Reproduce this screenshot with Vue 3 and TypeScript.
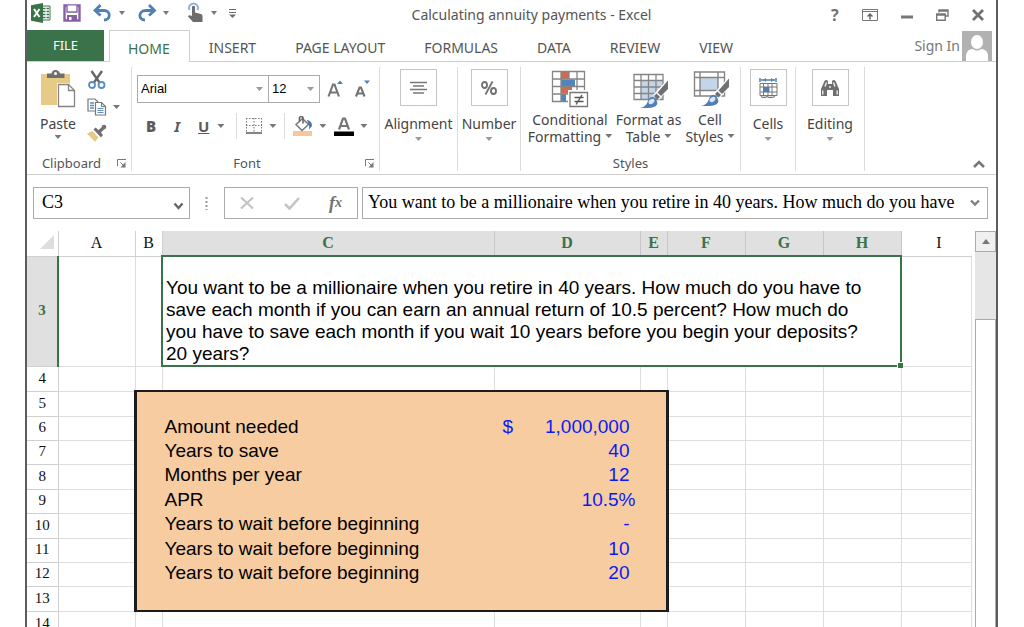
<script setup lang="ts">
import { ref } from 'vue'

interface InputRow {
  n: number
  height: number
  label?: string
  sign?: string
  value?: string
  percent?: boolean
}

const tabs: string[] = ['HOME', 'INSERT', 'PAGE LAYOUT', 'FORMULAS', 'DATA', 'REVIEW', 'VIEW']
const columns: string[] = ['A', 'B', 'C', 'D', 'E', 'F', 'G', 'H', 'I']
const selectedColumns: string[] = ['C', 'D', 'E', 'F', 'G', 'H']
const activeTab = ref<string>('HOME')
const cellName = ref<string>('C3')
const formula = ref<string>('You want to be a millionaire when you retire in 40 years. How much do you have')

const inputRows: InputRow[] = [
  { n: 5, height: 25 },
  { n: 6, height: 24, label: 'Amount needed', sign: '$', value: '1,000,000' },
  { n: 7, height: 24, label: 'Years to save', value: '40' },
  { n: 8, height: 25, label: 'Months per year', value: '12' },
  { n: 9, height: 24, label: 'APR', value: '10.5%', percent: true },
  { n: 10, height: 25, label: 'Years to wait before beginning', value: '-' },
  { n: 11, height: 24, label: 'Years to wait before beginning', value: '10' },
  { n: 12, height: 24, label: 'Years to wait before beginning', value: '20' },
  { n: 13, height: 25 },
]
</script>

<template>
  <div class="window">
    <header class="titlebar">
      <div class="quick">
        <svg width="20" height="20" viewBox="0 0 20 20" aria-hidden="true">
          <path d="M10 3h9v14h-9z" fill="#fff" stroke="#3a7249" />
          <path d="M12 5.5h2.5M15.5 5.5H18M12 8.5h2.5M15.5 8.5H18M12 11.5h2.5M15.5 11.5H18M12 14.5h2.5M15.5 14.5H18" stroke="#3a7249" stroke-width="1.6" />
          <path d="M0 2.2 12 0v20L0 17.8z" fill="#3a7249" />
          <path d="m3 6 5.5 8M8.5 6 3 14" stroke="#fff" stroke-width="1.9" />
        </svg>
        <button aria-label="Save">
          <svg width="18" height="18" viewBox="0 0 18 18">
            <path d="M1.500 1.500h15v15h-15z" fill="#fff" stroke="#8560a8" stroke-width="2.400" />
            <path d="M4 1.500v6.500h10v-6.500" fill="#fff" stroke="#8560a8" stroke-width="1.400" />
            <path d="M4 17v-6h10v6z" fill="#8560a8" /><path d="M6 13h2.500v3H6z" fill="#fff" />
          </svg>
        </button>
        <button class="split" aria-label="Undo">
          <svg width="20" height="18" viewBox="0 0 20 18">
            <path d="M2 6.500h9c7 0 7 9.500 0 9.500" fill="none" stroke="#4f7fb5" stroke-width="2.800" />
            <path d="M7.500 1 2 6.500l5.500 5" fill="none" stroke="#4f7fb5" stroke-width="2.800" />
          </svg><i class="caret"></i>
        </button>
        <button class="split" aria-label="Redo">
          <svg width="20" height="18" viewBox="0 0 20 18">
            <path d="M17 6.500H9c-8 0-8 9.500-1 9.500" fill="none" stroke="#4f7fb5" stroke-width="2.800" />
            <path d="m12 1 5.500 5.500-5.500 5" fill="none" stroke="#4f7fb5" stroke-width="2.800" />
          </svg><i class="caret"></i>
        </button>
        <button class="split" aria-label="Touch mode">
          <svg width="24" height="22" viewBox="0 0 24 22">
            <path d="M8.500 8a4.500 4.500 0 1 1 8 0" fill="none" stroke="#92b2d6" stroke-width="2" />
            <path d="M11 4.500q1.500-1.500 3 0v6l6 1.500q1.500.5 1.500 2v6h-9.500L7 14.500q1-2 4-.5z" fill="#6d6d6d" />
          </svg><i class="caret"></i>
        </button>
        <button aria-label="Customize toolbar">
          <svg width="7" height="9" viewBox="0 0 7 9"><path d="M0 .5h7M0 3.500h7" stroke="#6d6d6d" /><path d="M0 5.500h7L3.500 9z" fill="#6d6d6d" /></svg>
        </button>
      </div>
      <h1>Calculating annuity payments - Excel</h1>
      <div class="controls">
        <button class="help" aria-label="Help">?</button>
        <button aria-label="Ribbon display options">
          <svg width="16" height="12" viewBox="0 0 16 12"><path d="M.5.5h15v11H.5zM0 2.500h16" fill="none" stroke="#777" /><path d="M8 10.500V5M5.500 7.500 8 5l2.500 2.500" fill="none" stroke="#666" stroke-width="1.500" /></svg>
        </button>
        <button aria-label="Minimize"><svg width="12" height="12" viewBox="0 0 12 12"><path d="M0 8h12" stroke="#777" stroke-width="3" /></svg></button>
        <button aria-label="Restore">
          <svg width="13" height="12" viewBox="0 0 13 12"><path d="M3 3.500V1h9v6h-2.500M3 2h9M.7 5h8.500v6.300H.7zM.7 6h8.500" fill="none" stroke="#777" stroke-width="1.400" /></svg>
        </button>
        <button aria-label="Close"><svg width="12" height="12" viewBox="0 0 12 12"><path d="m1 1 10 10M11 1 1 11" stroke="#707070" stroke-width="2.800" /></svg></button>
      </div>
    </header>

    <nav class="tabs">
      <button class="file">FILE</button>
      <button v-for="tab in tabs" :key="tab" class="tab" :class="{ active: tab === activeTab }" @click="activeTab = tab">{{ tab }}</button>
      <a class="signin" href="#signin">Sign In
        <svg width="30" height="30" viewBox="0 0 30 30" aria-hidden="true">
          <path d="M0 0h30v30H0z" fill="#b1b1b1" /><ellipse cx="15" cy="11" rx="6" ry="7" fill="#fff" />
          <path d="M4 30V24q1-6 7-6 4 3 8 0 6 0 7 6v6z" fill="#fff" />
        </svg>
      </a>
    </nav>

    <section class="ribbon">
      <div class="group clipboard">
        <div class="clip-body">
          <button class="paste">
            <svg width="36" height="38" viewBox="0 0 36 38">
              <path d="M1 4h29v31H1z" fill="#e8ca87" />
              <path d="M7 8V3.500h4.500Q12 0 15.500 0T20 3.500h4.500V8z" fill="#6e6e6e" /><circle cx="15.500" cy="3.500" r="1.500" fill="#fff" />
              <path d="M17 13h12l7 7v18H17z" fill="#fff" />
              <path d="M18.500 14.500h10l6 6v16h-16z" fill="#fff" stroke="#848484" stroke-width="1.300" /><path d="M28.500 14.500v6h6" fill="none" stroke="#848484" stroke-width="1.300" />
            </svg>
            <span>Paste</span><i class="caret"></i>
          </button>
          <div class="clip-tools">
            <button aria-label="Cut">
              <svg width="20" height="20" viewBox="0 0 20 20"><path d="m4.500 1 8 11.500M15 1 7 12.500" stroke="#666" stroke-width="2.400" /><circle cx="5" cy="15" r="3" fill="none" stroke="#5b8cc5" stroke-width="1.800" /><circle cx="14.500" cy="15" r="3" fill="none" stroke="#5b8cc5" stroke-width="1.800" /></svg>
            </button>
            <button class="split" aria-label="Copy">
              <svg width="20" height="18" viewBox="0 0 20 18">
                <path d="M1 1h7l3 3v9H1z" fill="#fff" stroke="#777" stroke-width="1.200" /><path d="M3 5h4M3 7.500h4M3 10h4" stroke="#5b8cc5" stroke-width="1.300" />
                <path d="M8.500 4.500h6l4 4v8.500h-10z" fill="#fff" stroke="#777" stroke-width="1.200" /><path d="M14.500 4.500v4h4" fill="none" stroke="#777" /><path d="M10.500 10.500h6M10.500 12.500h6M10.500 14.500h6" stroke="#5b8cc5" />
              </svg><i class="caret"></i>
            </button>
            <button aria-label="Format painter">
              <svg width="20" height="18" viewBox="0 0 20 18"><path d="m0 9.500 5.500-2.500 6 6.500-3.500 4.500z" fill="#e8ca87" /><path d="m6.500 5.500 2-2 3 2.500 4-3.500 2 2.500-3.500 3.500 2 2.500-2 2.500z" fill="#707070" /><circle cx="17" cy="3" r="2.300" fill="#707070" /></svg>
            </button>
          </div>
        </div>
        <footer><span>Clipboard</span><button class="launcher" aria-label="Clipboard settings"><svg width="10" height="9" viewBox="0 0 10 9"><path d="M.5 7V.5H9M3.500 3.500l4 4" fill="none" stroke="#777" /><path d="M8.500 3v5.500H3.500z" fill="#777" /></svg></button></footer>
      </div>

      <div class="group font">
        <div class="font-row top">
          <label class="combo name"><select aria-label="Font name"><option>Arial</option></select><i class="caret light"></i></label>
          <label class="combo size"><select aria-label="Font size"><option>12</option></select><i class="caret light"></i></label>
          <button class="grow" aria-label="Increase font size"><svg width="17" height="18" viewBox="0 0 17 18"><path d="m1.500 16.500 4.500-12h1.500l4.500 12M3.500 12.500h7" fill="none" stroke="#747474" stroke-width="2.100" /><path d="m10 4 3-3.500L16 4z" fill="#4f7fb5" /></svg></button>
          <button class="shrink" aria-label="Decrease font size"><svg width="17" height="18" viewBox="0 0 17 18"><path d="m2 16.500 3.500-9h1.500l3.500 9M3.500 13.500h5.500" fill="none" stroke="#747474" stroke-width="2.100" /><path d="m10 .5 3 3.500 3-3.500z" fill="#4f7fb5" /></svg></button>
        </div>
        <div class="font-row bottom">
          <button class="letter"><b>B</b></button>
          <button class="letter italic"><em>I</em></button>
          <button class="letter split"><u>U</u><i class="caret"></i></button>
          <span class="bar"></span>
          <button class="split" aria-label="Borders"><svg width="18" height="18" viewBox="0 0 18 18"><path d="M1.500 1v15M16.500 1v15M9 1v15M1 1.500h16M1 8.500h16" stroke="#777" stroke-dasharray="1.500 1.500" /><path d="M1 16h16" stroke="#666" stroke-width="1.600" /></svg><i class="caret"></i></button>
          <span class="bar"></span>
          <button class="split" aria-label="Fill color"><svg width="20" height="20" viewBox="0 0 20 20"><path d="M0 15h19v5H0z" fill="#f5c99b" /><path d="m9.500 2.500 6 6-6.500 6-6-6z" fill="#fff" stroke="#777" stroke-width="1.500" /><path d="M6.500 5.500V1.500q2-2 3.500 0v6" fill="none" stroke="#666" stroke-width="1.600" /><path d="M13.500 4q5.500.5 5.500 6l-3 3.500q1-5-2.500-9.500z" fill="#4676ab" /></svg><i class="caret"></i></button>
          <button class="split" aria-label="Font color"><svg width="20" height="20" viewBox="0 0 20 20"><path d="m5 13.500 4-11h2l4 11M7 10h6" fill="none" stroke="#777" stroke-width="2.200" /><path d="M0 15.500h20v4.500H0z" fill="#000" /></svg><i class="caret"></i></button>
        </div>
        <footer><span>Font</span><button class="launcher" aria-label="Font settings"><svg width="10" height="9" viewBox="0 0 10 9"><path d="M.5 7V.5H9M3.500 3.500l4 4" fill="none" stroke="#777" /><path d="M8.500 3v5.500H3.500z" fill="#777" /></svg></button></footer>
      </div>

      <div class="group alignment">
        <button class="big"><span class="tile"><svg width="18" height="14" viewBox="0 0 18 14"><path d="M0 1.500h17M3 5h11M0 8.500h17M3 12h11" stroke="#777" stroke-width="1.500" /></svg></span><span>Alignment</span><i class="caret light"></i></button>
      </div>
      <div class="group number">
        <button class="big"><span class="tile"><svg width="16" height="14" viewBox="0 0 16 14"><path d="M11.500.5 4.500 13.500" stroke="#707070" stroke-width="1.800" /><ellipse cx="3.500" cy="4" rx="2.500" ry="3" fill="none" stroke="#707070" stroke-width="1.900" /><ellipse cx="12.500" cy="10" rx="2.500" ry="3" fill="none" stroke="#707070" stroke-width="1.900" /></svg></span><span>Number</span><i class="caret light"></i></button>
      </div>
      <div class="group styles">
        <div class="style-row">
          <button class="style wide">
            <svg width="38" height="38" viewBox="0 0 38 38">
              <path d="M1.500 1.500h32v30h-32z" fill="#fff" />
              <path d="M10 2h8v7h-8zM10 16.500h11v7H10z" fill="#d0694d" /><path d="M10 9.500h14v7H10zM10 24h5v7h-5z" fill="#5184bd" />
              <path d="M1.500 1.500h32v30h-32zM10 1.500v30M18 1.500v7M26 1.500v30M1.500 9h32M1.500 16.500h32M1.500 24h32" fill="none" stroke="#858585" stroke-width="1.300" />
              <path d="M17 20h21v18H17z" fill="#fff" /><path d="M19 22.500h17.500v14H19z" fill="#fff" stroke="#777" stroke-width="1.300" />
              <path d="M23.500 27.500h9M23.500 31.500h9M31 25l-6 9.500" stroke="#555" stroke-width="1.400" />
            </svg>
            <span>Conditional<br>Formatting<i class="caret"></i></span>
          </button>
          <button class="style mid">
            <svg width="38" height="38" viewBox="0 0 38 38">
              <path d="M4 4.500h29v25H4z" fill="#fff" /><path d="M11 11h22v18H11z" fill="#c3d6e9" />
              <path d="M4 4.500h29v25H4zM11 4.500v25M18.500 4.500v25M26 4.500v25M4 10.500h29M4 17h29M4 23.500h29" fill="none" stroke="#858585" stroke-width="1.300" />
              <path d="M38 9v10L29 30l-6-5z" fill="#fff" /><path d="M38 10.500v8.500L31 26l-3.500-3.500z" fill="#707070" /><path d="m26.500 23.500 3.500 3.500-2.500 2.500-3.500-3.500z" fill="#707070" />
              <path d="M10 38q6-1 8-7t7-3q7 9-7 10z" fill="#4f7fb5" /><ellipse cx="21.500" cy="31.500" rx="3.300" ry="2.200" fill="#d9e7f5" transform="rotate(-40 21.500 31.500)" />
            </svg>
            <span>Format as<br>Table<i class="caret"></i></span>
          </button>
          <button class="style">
            <svg width="38" height="38" viewBox="0 0 38 38">
              <path d="M3.500 2h30v24h-30z" fill="#fff" /><path d="M9 7.500h18v13H9z" fill="#c3d6e9" />
              <path d="M3.500 2h30v24h-30zM9 2v24M27 2v24M3.500 7.500h30M3.500 20.500h30" fill="none" stroke="#858585" stroke-width="1.400" />
              <path d="M38 7v10L29 28l-6-5z" fill="#fff" /><path d="M38 8.500v8.500L31 24l-3.500-3.500z" fill="#707070" /><path d="m26.500 21.500 3.500 3.500-2.500 2.500-3.500-3.500z" fill="#707070" />
              <path d="M10 36q6-1 8-7t7-3q7 9-7 10z" fill="#4f7fb5" /><ellipse cx="21.500" cy="29.500" rx="3.300" ry="2.200" fill="#d9e7f5" transform="rotate(-40 21.500 29.500)" />
            </svg>
            <span>Cell<br>Styles<i class="caret"></i></span>
          </button>
        </div>
        <footer><span>Styles</span></footer>
      </div>
      <div class="group cells">
        <button class="big"><span class="tile"><svg width="19" height="20" viewBox="0 0 19 20"><path d="M1 0v4M17 0v4M2 2h3M6 2h7M14 2h2" stroke="#4f7fb5" stroke-width="1.500" /><path d="m7 0-3 2 3 2zM12 0l3 2-3 2z" fill="#4f7fb5" /><path d="M1 5.500h17v12H1zM1 9h17M1 14h17M4.500 5.500v12M13 5.500v12M9 5.500v12" fill="none" stroke="#777" /><path d="M5 9h5.500v5H5z" fill="#4f7fb5" /><path d="M2 18.500q3 2 6 0 3 2 8 0" fill="none" stroke="#777" stroke-width="1.300" /></svg></span><span>Cells</span><i class="caret light"></i></button>
      </div>
      <div class="group editing">
        <button class="big"><span class="tile"><svg width="18" height="18" viewBox="0 0 18 18"><path d="M3.500 2Q5 0 7 2v3h4V2q2-2 3.500 0l3.500 8v7h-6v-6H6v6H0v-7z" fill="#707070" /><path d="M1.800 11.500v4M16.200 11.500v4M5.500 3.500l-1.500 4M12.500 3.500l1.500 4M9 7v2" stroke="#fff" stroke-width="1.200" /></svg></span><span>Editing</span><i class="caret light"></i></button>
      </div>
      <button class="collapse" aria-label="Collapse ribbon"><svg width="12" height="9" viewBox="0 0 12 9"><path d="m1 7 5-5 5 5" fill="none" stroke="#777" stroke-width="2.600" /></svg></button>
    </section>

    <section class="formula-bar">
      <div class="field name-box">
        <input v-model="cellName" aria-label="Name box">
        <button aria-label="Choose name"><svg width="11" height="9" viewBox="0 0 11 9"><path d="m1.500 1.500 4 4.500 4-4.500" fill="none" stroke="#666" stroke-width="2.400" /></svg></button>
      </div>
      <svg class="dots" width="3" height="14" viewBox="0 0 3 14" aria-hidden="true"><path d="M1.500 1v13" stroke="#999" stroke-width="2" stroke-dasharray="2 2" /></svg>
      <div class="field entry">
        <button aria-label="Cancel"><svg width="14" height="12" viewBox="0 0 14 12"><path d="m1 .5 12 11M13 .5l-12 11" stroke="#c4c4c4" stroke-width="2.200" /></svg></button>
        <button aria-label="Enter"><svg width="16" height="13" viewBox="0 0 16 13"><path d="m1 7 4.500 4.500L15 1" fill="none" stroke="#c4c4c4" stroke-width="2.600" /></svg></button>
        <button class="fx" aria-label="Insert function"><em>f</em><sub>x</sub></button>
      </div>
      <div class="field formula">
        <input v-model="formula" aria-label="Formula">
        <button aria-label="Expand formula bar"><svg width="10" height="8" viewBox="0 0 10 8"><path d="m1 1.500 4 4 4-4" fill="none" stroke="#808080" stroke-width="2.400" /></svg></button>
      </div>
    </section>

    <main class="sheet">
      <div class="grid">
        <table>
          <colgroup>
            <col class="w-head"><col class="w-a"><col class="w-b"><col class="w-c"><col class="w-d"><col class="w-e"><col class="w-f"><col class="w-g"><col class="w-h"><col>
          </colgroup>
          <thead>
            <tr>
              <th class="corner" aria-label="Select all"><svg width="14" height="14" viewBox="0 0 14 14"><path d="M14 0v14H0z" fill="#dedede" /></svg></th>
              <th v-for="c in columns" :key="c" scope="col" :class="{ on: selectedColumns.includes(c) }">{{ c }}</th>
            </tr>
          </thead>
          <tbody>
            <tr class="question-row">
              <th scope="row" class="on">3</th>
              <td></td>
              <td></td>
              <td colspan="6" class="selected">You want to be a millionaire when you retire in 40 years. How much do you have to save each month if you can earn an annual return of 10.5 percent? How much do you have to save each month if you wait 10 years before you begin your deposits? 20 years?<i class="handle"></i></td>
              <td></td>
            </tr>
            <tr class="plain-row">
              <th scope="row">4</th>
              <td v-for="c in columns" :key="c"></td>
            </tr>
            <tr v-for="(row, i) in inputRows" :key="row.n" :class="{ first: i === 0, last: i === inputRows.length - 1 }" :style="{ height: row.height + 'px' }">
              <th scope="row">{{ row.n }}</th>
              <td></td>
              <td class="box left"></td>
              <td class="box">{{ row.label }}</td>
              <td class="box amount" :class="{ percent: row.percent }"><div v-if="row.value"><span>{{ row.sign }}</span><span>{{ row.value }}</span></div></td>
              <td class="box right"></td>
              <td></td><td></td><td></td><td></td>
            </tr>
            <tr class="plain-row">
              <th scope="row">14</th>
              <td v-for="c in columns" :key="c"></td>
            </tr>
          </tbody>
        </table>
      </div>
      <div class="scroll">
        <button aria-label="Scroll up"><svg width="8" height="5" viewBox="0 0 8 5"><path d="M0 5h8L4 0z" fill="#777" /></svg></button>
        <div class="thumb"></div>
      </div>
    </main>
  </div>
</template>

<style>
body { margin: 0; background: #fff; }
</style>

<style scoped>
* { box-sizing: border-box; }
.window {
  height: 100vh;
  margin: 0 26px 0 25px;
  border: solid #5c5c5f;
  border-width: 0 2px;
  display: flex;
  flex-direction: column;
  overflow: hidden;
  background: #fff;
  color: #444;
  font: 14px/17px "Noto Sans", "Open Sans", sans-serif;
}
button { display: flex; align-items: center; justify-content: center; border: 0; padding: 0; background: none; color: inherit; font: inherit; }
svg { display: block; flex: none; }
.caret { width: 7px; height: 4px; flex: none; background: #777; clip-path: polygon(0 0, 100% 0, 50% 100%); }
.caret.light { background: #999; }
.split { gap: 6px; }

.titlebar { display: flex; height: 30px; flex: none; }
.quick { display: flex; align-items: center; gap: 12px; width: 210px; height: 26px; padding-left: 4px; flex: none; }
.quick .caret { width: 6px; }
h1 { flex: 1; margin: 0; text-align: center; font-size: 14px; line-height: 30px; font-weight: 400; color: #555; white-space: nowrap; }
.controls { display: flex; align-items: center; justify-content: space-between; width: 170px; padding: 0 12px 0 5px; flex: none; }
.help { font-size: 16px; font-weight: 700; color: #707070; }

.tabs { display: flex; height: 32px; flex: none; border-bottom: 1px solid #d0d0d0; color: #555; }
.file { width: 77px; height: 31px; margin-right: 5px; background: #3a7249; color: #fff; font-size: 13px; }
.tab { padding: 3px 19px 0 18px; white-space: nowrap; border: 1px solid transparent; border-bottom: 0; }
.tab.active { height: 32px; border-color: #d0d0d0; background: #fff; color: #3a7249; }
.signin { display: flex; align-items: center; gap: 2px; margin-left: auto; margin-right: 4px; height: 31px; color: #777; text-decoration: none; }

.ribbon { display: flex; height: 113px; flex: none; padding-top: 5px; border-bottom: 1px solid #d0d0d0; }
.group { display: flex; flex-direction: column; height: 104px; border-right: 1px solid #dcdcdc; flex: none; }
.clipboard { width: 105px; }
.font { width: 248px; }
.alignment { width: 78px; }
.number { width: 63px; }
.styles { width: 220px; }
.cells { width: 55px; }
.editing { width: 69px; }
footer { display: flex; justify-content: center; align-items: center; margin-top: auto; height: 15px; position: relative; font-size: 13px; color: #555; }
.clipboard footer { padding-right: 15px; }
.font footer { padding-right: 17px; }
.launcher { position: absolute; right: 4px; top: 3px; }
.clip-body { display: flex; padding: 3px 0 0 13px; }
.paste { flex-direction: column; justify-content: flex-start; color: #444; }
.paste span { margin-top: 7px; }
.paste .caret { margin-top: 3px; }
.clip-tools { display: flex; flex-direction: column; align-items: flex-start; gap: 8px; margin-left: 11px; }
.font-row { display: flex; align-items: center; }
.top { padding: 8px 0 0 5px; }
.combo { display: flex; align-items: center; height: 28px; border: 1px solid #ababab; position: relative; }
.combo.name { width: 132px; }
.combo.size { width: 52px; margin-left: -1px; }
.combo select { appearance: none; width: 100%; height: 24px; border: 0; padding: 0 3px 2px; background: none; color: #000; font: 13px "Liberation Sans", Arial, sans-serif; }
.combo .caret { position: absolute; right: 5px; }
.grow { margin-left: 7px; }
.shrink { margin-left: 10px; }
.bottom { padding: 10px 0 0 13px; height: 36px; gap: 8px; }
.letter { font: 700 15px/20px "Noto Sans", sans-serif; color: #5c5c5c; width: 12px; }
.letter.italic { margin-left: 6px; }
.letter.split { width: auto; gap: 8px; margin: 0 4px 0 7px; }
.bar { width: 1px; height: 26px; background: #dcdcdc; }
.big { flex-direction: column; padding-top: 2px; color: #444; }
.tile { width: 37px; height: 37px; display: flex; align-items: center; justify-content: center; border: 1px solid #c4c4c4; margin-bottom: 9px; }
.big .caret { margin-top: 5px; }
.style-row { display: flex; padding: 3px 0 0 4px; }
.style { flex-direction: column; width: 56px; gap: 3px; color: #444; white-space: nowrap; }
.style.wide { width: 90px; }
.style.mid { width: 67px; }
.style .caret { display: inline-block; margin: 0 0 4px 4px; }
.collapse { margin: auto 11px 5px auto; }

.formula-bar { display: flex; align-items: center; height: 56px; flex: none; padding: 0 8px 0 6px; }
.field { display: flex; align-items: center; height: 32px; border: 1px solid #ababab; }
.field input { flex: 1; min-width: 0; border: 0; padding: 0 0 2px; outline: 0; background: none; color: #000; font: 18px "Liberation Serif", "Times New Roman", serif; }
.name-box { width: 157px; padding: 0 5px 0 8px; }
.name-box button { padding-top: 6px; }
.dots { margin: 0 16px 0 15px; }
.entry { width: 134px; justify-content: space-between; padding: 0 15px; }
.fx { font: 18px/20px "Liberation Serif", serif; color: #707070; font-weight: 700; }
.fx sub { font-size: 14px; font-style: italic; line-height: 14px; }
.formula { flex: 1; margin-left: 4px; padding: 0 7px 0 5px; }

.sheet { display: flex; flex: 1; min-height: 0; }
.grid { flex: 1; min-width: 0; overflow: hidden; margin-right: 3px; }
table { width: 100%; table-layout: fixed; border-collapse: collapse; border-spacing: 0; }
.w-head { width: 31px; }
.w-a { width: 77px; }
.w-b { width: 27px; }
.w-c { width: 332px; }
.w-d { width: 146px; }
.w-e { width: 27px; }
.w-f { width: 78px; }
.w-g { width: 78px; }
.w-h { width: 78px; }
th { padding: 0; color: #111; font: 15px/20px "Liberation Serif", "Times New Roman", serif; text-align: center; }
thead tr { height: 25px; }
thead th { border: 1px solid #d0d0d0; border-top: 0; font-size: 16px; }
thead th:first-child { border-left: 0; }
thead th:nth-child(10) { border-right: 0; padding-left: 5px; }
thead th.on { background: #e0e0e0; color: #3a7249; font-weight: 700; border-color: #c6c6c6; }
.corner svg { margin: 0 4px 2px auto; }
tbody th { border: 1px solid #d0d0d0; border-left: 0; padding-bottom: 2px; }
tbody th.on { background: #e0e0e0; color: #3a7249; font-weight: 700; border-right: 2px solid #3a7249; }
td { border: 1px solid #dedede; padding: 0; color: #000; font: 19px/22px "Liberation Sans", Arial, sans-serif; white-space: nowrap; }
.question-row { height: 110px; }
.plain-row { height: 25px; }
.selected { position: relative; border: 2px solid #3a7249; padding: 0 16px 0 3px; vertical-align: bottom; white-space: normal; }
.handle { position: absolute; right: -3px; bottom: -3px; width: 6px; height: 6px; background: #3a7249; border: solid #fff; border-width: 1px 0 0 1px; }
.box { background: #f6cca0; border-color: #f6cca0; padding: 0 0 3px 2px; line-height: 20px; }
.left { border-left: 3px solid #1c1c1c; padding: 0; }
.right { border-right: 3px solid #1c1c1c; padding: 0; }
.first .box { border-top: 2px solid #1c1c1c; }
.last .box { border-bottom: 2px solid #1c1c1c; }
.amount { color: #0a1cf5; padding: 0 10px 3px 8px; }
.amount.percent { padding-right: 4px; }
.amount div { display: flex; justify-content: space-between; }
.scroll { width: 21px; flex: none; display: flex; flex-direction: column; background: #e6e6e6; }
.scroll button { height: 21px; border: 1px solid #ababab; background: #f0f0f0; flex: none; }
.thumb { flex: 1; margin-top: 67px; border: 1px solid #ababab; border-bottom: 0; background: #fff; }
</style>
